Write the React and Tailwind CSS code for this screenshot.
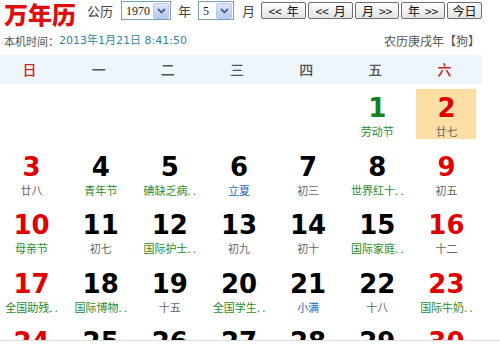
import React from "react";

const G = "text-[#2b8a2b]";
const K = "text-[#666]";
const B = "text-[#2a66b8]";

const rows = [
  [null, null, null, null, null, { n: 1, nc: "text-[#16801c]", l: "劳动节", lc: G }, { n: 2, nc: "text-[#e00000]", l: "廿七", lc: K, hl: true }],
  [
    { n: 3, nc: "text-[#e00000]", l: "廿八", lc: K },
    { n: 4, l: "青年节", lc: G },
    { n: 5, l: "碘缺乏病. .", lc: G },
    { n: 6, l: "立夏", lc: B },
    { n: 7, l: "初三", lc: K },
    { n: 8, l: "世界红十. .", lc: G },
    { n: 9, nc: "text-[#e00000]", l: "初五", lc: K },
  ],
  [
    { n: 10, nc: "text-[#e00000]", l: "母亲节", lc: G },
    { n: 11, l: "初七", lc: K },
    { n: 12, l: "国际护士. .", lc: G },
    { n: 13, l: "初九", lc: K },
    { n: 14, l: "初十", lc: K },
    { n: 15, l: "国际家庭. .", lc: G },
    { n: 16, nc: "text-[#e00000]", l: "十二", lc: K },
  ],
  [
    { n: 17, nc: "text-[#e00000]", l: "全国助残. .", lc: G },
    { n: 18, l: "国际博物. .", lc: G },
    { n: 19, l: "十五", lc: K },
    { n: 20, l: "全国学生. .", lc: G },
    { n: 21, l: "小满", lc: B },
    { n: 22, l: "十八", lc: K },
    { n: 23, nc: "text-[#e00000]", l: "国际牛奶. .", lc: G },
  ],
  [
    { n: 24, nc: "text-[#e00000]", l: "", lc: K },
    { n: 25, l: "", lc: K },
    { n: 26, l: "", lc: K },
    { n: 27, l: "", lc: K },
    { n: 28, l: "", lc: K },
    { n: 29, l: "", lc: K },
    { n: 30, nc: "text-[#e00000]", l: "", lc: K },
  ],
];

function Chevron() {
  return (
    <span className="flex items-center justify-center w-[16px] h-[16px] bg-gradient-to-b from-[#dce6fd] to-[#b5c9f6] border border-[#b8c8ee] rounded-[2px]">
      <svg width="9" height="6" viewBox="0 0 9 6">
        <path d="M1 1 L4.5 4.5 L8 1" fill="none" stroke="#4d6185" strokeWidth="1.8" />
      </svg>
    </span>
  );
}

function Select({ value, w }) {
  return (
    <div className={`flex items-center justify-between h-[19px] ${w} border border-[#7f9db9] bg-white pl-[4px] pr-[1px]`}>
      <span className="text-[12px] leading-none text-[#222] font-['Liberation_Serif',serif]">{value}</span>
      <Chevron />
    </div>
  );
}

function Btn({ children, w }) {
  return (
    <div className={`flex items-center justify-center h-[17px] ${w} border border-[#6f6f6f] rounded-[2px] bg-gradient-to-b from-white to-[#e3e3e3] text-[12px] leading-none text-[#111] gap-[5px]`}>
      {children}
    </div>
  );
}

export default function App() {
  return (
    <div className="w-[500px] h-[344px] bg-white overflow-hidden font-['DejaVu_Sans','Noto_Sans_CJK_SC',sans-serif]">
      <div className="h-[341px] overflow-hidden border-b border-[#dcdcdc]">
        {/* top bar */}
        <div className="flex items-start h-[30px]">
          <div className="ml-[4px] text-[24px] leading-[28px] font-black text-[#dd1010] font-['Noto_Sans_CJK_SC',serif]">万年历</div>
          <div className="ml-[11px] mt-[3px] text-[13px] leading-[15px] text-[#444] font-['Noto_Sans_CJK_SC',sans-serif]">公历</div>
          <div className="ml-[8px] mt-[1px]">
            <Select value="1970" w="w-[50px]" />
          </div>
          <div className="ml-[7px] mt-[3px] text-[13px] leading-[15px] text-[#444] font-['Noto_Sans_CJK_SC',sans-serif]">年</div>
          <div className="ml-[7px] mt-[1px]">
            <Select value="5" w="w-[36px]" />
          </div>
          <div className="ml-[8px] mt-[3px] text-[13px] leading-[15px] text-[#444] font-['Noto_Sans_CJK_SC',sans-serif]">月</div>
          <div className="ml-[6px] mt-[2px] flex gap-[2px] font-['Noto_Sans_CJK_SC',sans-serif]">
            <Btn w="w-[45px]"><span>&lt;&lt;</span><span>年</span></Btn>
            <Btn w="w-[45px]"><span>&lt;&lt;</span><span>月</span></Btn>
            <Btn w="w-[44px]"><span>月</span><span>&gt;&gt;</span></Btn>
            <Btn w="w-[44px]"><span>年</span><span>&gt;&gt;</span></Btn>
            <Btn w="w-[35px]"><span>今日</span></Btn>
          </div>
        </div>
        {/* info line */}
        <div className="flex items-center justify-between h-[22px] pl-[4px] pr-[20px] text-[11px]">
          <div className="flex items-center">
            <span className="text-[#555] font-['Noto_Sans_CJK_SC',sans-serif]">本机时间：</span>
            <span className="text-[#3584a8]">2013年1月21日 8:41:50</span>
          </div>
          <span className="text-[#555] text-[12px] font-['Noto_Sans_CJK_SC',sans-serif]">农历庚戌年【狗】</span>
        </div>
        {/* weekday header */}
        <div className="mt-[3px] w-[482px] h-[29px] bg-[#eef6fd] overflow-hidden">
          <div className="ml-[-5px] w-[484px] h-full grid grid-cols-7 items-center text-[14px] font-medium font-['Noto_Sans_CJK_SC',sans-serif]">
            <div className="text-center text-[#cc2222]">日</div>
            <div className="text-center text-[#555]">一</div>
            <div className="text-center text-[#555]">二</div>
            <div className="text-center text-[#555]">三</div>
            <div className="text-center text-[#555]">四</div>
            <div className="text-center text-[#555]">五</div>
            <div className="text-center text-[#cc2222]">六</div>
          </div>
        </div>
        {/* days */}
        <div className="mt-[2px] ml-[-3px] w-[484px] grid grid-cols-7">
          {rows.flat().map((c, i) => (
            <div key={i} className="h-[58.5px] flex justify-center pt-[3px]">
              {c && (
                <div className={`w-[60px] h-[50px] flex flex-col items-center pt-[6px] ${c.hl ? "bg-[#fddfa6]" : ""}`}>
                  <div className={`text-[26px] leading-[26px] font-bold ${c.nc || "text-black"}`}>{c.n}</div>
                  <div className={`mt-[3px] text-[11px] leading-[14px] whitespace-nowrap font-['Noto_Sans_CJK_SC',sans-serif] ${c.lc}`}>{c.l}</div>
                </div>
              )}
            </div>
          ))}
        </div>
      </div>
    </div>
  );
}
